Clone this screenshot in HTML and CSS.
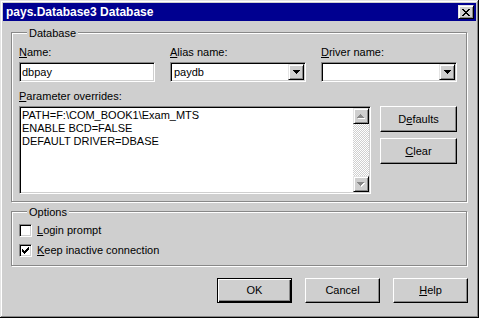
FILE: index.html
```html
<!DOCTYPE html>
<html lang="en">
<head>
  <meta charset="UTF-8" />
  <title>pays.Database3 Database</title>
  <link rel="stylesheet" href="styles.css">
</head>
<body>

  <div class="dialog">
    <div class="titlebar">
      <span class="title">pays.Database3 Database</span>
      <button class="close-btn" type="button">
        <svg width="8" height="7" viewBox="0 0 8 7" shape-rendering="crispEdges">
          <path d="M0 0h2v1h-2z M6 0h2v1h-2z M1 1h2v1h-2z M5 1h2v1h-2z M2 2h4v1h-4z M3 3h2v1h-2z M2 4h4v1h-4z M1 5h2v1h-2z M5 5h2v1h-2z M0 6h2v1h-2z M6 6h2v1h-2z" fill="#000"/>
        </svg>
      </button>
    </div>

    <div class="dialog-body">

      <div class="group group-db">
        <div class="group-title">Database</div>

        <div class="field-row">
          <div class="field">
            <label><u>N</u>ame:</label>
            <div class="edit">dbpay</div>
          </div>
          <div class="field">
            <label><u>A</u>lias name:</label>
            <div class="combo">
              <span class="combo-text">paydb</span>
              <span class="combo-btn">
                <svg width="7" height="4" viewBox="0 0 7 4" shape-rendering="crispEdges"><path d="M0 0h7v1h-1v1h-1v1h-1v1h-1v-1h-1v-1h-1v-1h-1z" fill="#000"/></svg>
              </span>
            </div>
          </div>
          <div class="field">
            <label><u>D</u>river name:</label>
            <div class="combo">
              <span class="combo-text"></span>
              <span class="combo-btn">
                <svg width="7" height="4" viewBox="0 0 7 4" shape-rendering="crispEdges"><path d="M0 0h7v1h-1v1h-1v1h-1v1h-1v-1h-1v-1h-1v-1h-1z" fill="#000"/></svg>
              </span>
            </div>
          </div>
        </div>

        <label class="param-label"><u>P</u>arameter overrides:</label>
        <div class="memo-row">
          <div class="memo">
            <div class="memo-text">PATH=F:\COM_BOOK1\Exam_MTS
ENABLE BCD=FALSE
DEFAULT DRIVER=DBASE</div>
            <div class="scrollbar">
              <span class="scroll-btn">
                <svg width="8" height="5" viewBox="0 0 8 5" shape-rendering="crispEdges">
                  <path d="M4 1h1v1h1v1h1v1h1v1h-7v-1h1v-1h1v-1h1z" fill="#fff"/>
                  <path d="M3 0h1v1h1v1h1v1h1v1h-7v-1h1v-1h1v-1h1z" fill="#888"/>
                </svg>
              </span>
              <span class="scroll-track"></span>
              <span class="scroll-btn">
                <svg width="8" height="5" viewBox="0 0 8 5" shape-rendering="crispEdges">
                  <path d="M1 1h7v1h-1v1h-1v1h-1v1h-1v-1h-1v-1h-1v-1h-1z" fill="#fff"/>
                  <path d="M0 0h7v1h-1v1h-1v1h-1v1h-1v-1h-1v-1h-1v-1h-1z" fill="#888"/>
                </svg>
              </span>
            </div>
          </div>
          <div class="side-buttons">
            <button class="btn btn-side" type="button">D<u>e</u>faults</button>
            <button class="btn btn-side" type="button"><u>C</u>lear</button>
          </div>
        </div>
      </div>

      <div class="group group-opts">
        <div class="group-title">Options</div>
        <div class="check-row">
          <span class="checkbox"></span>
          <span class="check-label"><u>L</u>ogin prompt</span>
        </div>
        <div class="check-row">
          <span class="checkbox">
            <svg width="7" height="7" viewBox="0 0 7 7" shape-rendering="crispEdges"><path d="M0 2h1v1h1v1h1v-1h1v-1h1v-1h1v-1h1v3h-1v1h-1v1h-1v1h-1v1h-1v-1h-1v-1h-1z" fill="#000"/></svg>
          </span>
          <span class="check-label"><u>K</u>eep inactive connection</span>
        </div>
      </div>

      <div class="button-row">
        <button class="btn btn-default" type="button">OK</button>
        <button class="btn" type="button">Cancel</button>
        <button class="btn" type="button"><u>H</u>elp</button>
      </div>

    </div>
  </div>

</body>
</html>
```

FILE: styles.css
```css
:root {
  --face: #cfcfcf;
  --light: #e4e4e4;
  --shadow: #888;
  --hilite: #fff;
  --dark: #000;
  --title: #000090;
}

* {
  box-sizing: border-box;
}

html, body {
  margin: 0;
  padding: 0;
  background: var(--face);
}

body {
  font: 11px/13px "Liberation Sans", Arial, sans-serif;
  color: #000;
}

u {
  text-decoration: underline;
  text-underline-offset: 1px;
}

.dialog {
  width: 479px;
  height: 318px;
  padding: 3px;
  background: var(--face);
  box-shadow:
    inset -1px -1px var(--dark),
    inset 1px 1px var(--light),
    inset -2px -2px var(--shadow),
    inset 2px 2px var(--hilite);
}

/* title bar */
.titlebar {
  height: 18px;
  display: flex;
  align-items: center;
  justify-content: space-between;
  padding: 0 2px 0 3px;
  background: var(--title);
  color: #fff;
  font-weight: bold;
  font-size: 12px;
}

.close-btn {
  width: 16px;
  height: 14px;
  padding: 0;
  display: flex;
  align-items: center;
  justify-content: center;
  background: var(--face);
  border: 1px solid;
  border-color: var(--light) var(--dark) var(--dark) var(--light);
  box-shadow: inset 1px 1px var(--hilite), inset -1px -1px var(--shadow);
}

.dialog-body {
  padding: 11px 8px 0 8px;
}

/* group boxes */
.group {
  margin-right: 1px;
  border: 1px solid var(--shadow);
  box-shadow: inset 1px 1px var(--hilite), 1px 1px var(--hilite);
}

.group-title {
  display: table;
  margin: -6px 0 0 8px;
  padding: 0 2px;
  background: var(--face);
}

.group-db {
  padding: 0 9px 7px 7px;
}

.group-opts {
  margin-top: 9px;
  padding: 0 0 8px 7px;
}

.field-row {
  display: grid;
  grid-template-columns: repeat(3, 136px);
  column-gap: 15px;
  margin-top: 6px;
}

.field label,
.param-label {
  display: block;
  height: 13px;
}

/* sunken controls */
.edit,
.combo,
.memo,
.checkbox {
  background: #fff;
  border: 1px solid;
  border-color: var(--shadow) var(--hilite) var(--hilite) var(--shadow);
  box-shadow: inset 1px 1px var(--dark), inset -1px -1px var(--face);
}

.edit {
  height: 20px;
  margin-top: 3px;
  padding: 3px 2px 0;
}

.combo {
  height: 20px;
  margin-top: 3px;
  padding: 1px;
  display: flex;
}

.combo-text {
  flex: 1;
  padding: 2px 0 0 2px;
}

.combo-btn,
.scroll-btn {
  width: 16px;
  height: 16px;
  display: flex;
  align-items: center;
  justify-content: center;
  background: var(--face);
  border: 1px solid;
  border-color: var(--light) var(--dark) var(--dark) var(--light);
  box-shadow: inset 1px 1px var(--hilite), inset -1px -1px var(--shadow);
}

.param-label {
  margin-top: 8px;
}

.memo-row {
  display: flex;
  gap: 9px;
  margin-top: 3px;
}

.memo {
  width: 353px;
  height: 88px;
  padding: 1px;
  display: flex;
}

.memo-text {
  flex: 1;
  padding: 1px 0 0 1px;
  white-space: pre;
  overflow: hidden;
}

.scrollbar {
  width: 16px;
  display: flex;
  flex-direction: column;
}

.scroll-track {
  flex: 1;
  background: repeating-conic-gradient(var(--hilite) 0 25%, var(--face) 0 50%) 0 0 / 2px 2px;
}

.side-buttons {
  display: flex;
  flex-direction: column;
  gap: 6px;
}

/* push buttons */
.btn {
  width: 75px;
  height: 25px;
  padding: 0;
  font: inherit;
  color: #000;
  background: var(--face);
  border: 1px solid;
  border-color: var(--hilite) var(--dark) var(--dark) var(--hilite);
  box-shadow: inset -1px -1px var(--shadow);
}

.btn-side {
  width: 77px;
  height: 26px;
}

.btn-default {
  border-color: var(--dark);
  box-shadow: inset 1px 1px var(--hilite), inset -1px -1px var(--dark), inset -2px -2px var(--shadow);
}

.button-row {
  display: flex;
  justify-content: flex-end;
  gap: 13px;
  margin-top: 12px;
}

/* checkboxes */
.check-row {
  display: flex;
  align-items: flex-start;
  margin-top: 7px;
}

.group-title + .check-row {
  margin-top: 5px;
}

.checkbox {
  width: 13px;
  height: 13px;
  display: flex;
  align-items: center;
  justify-content: center;
}

.check-label {
  margin-left: 5px;
}
```
